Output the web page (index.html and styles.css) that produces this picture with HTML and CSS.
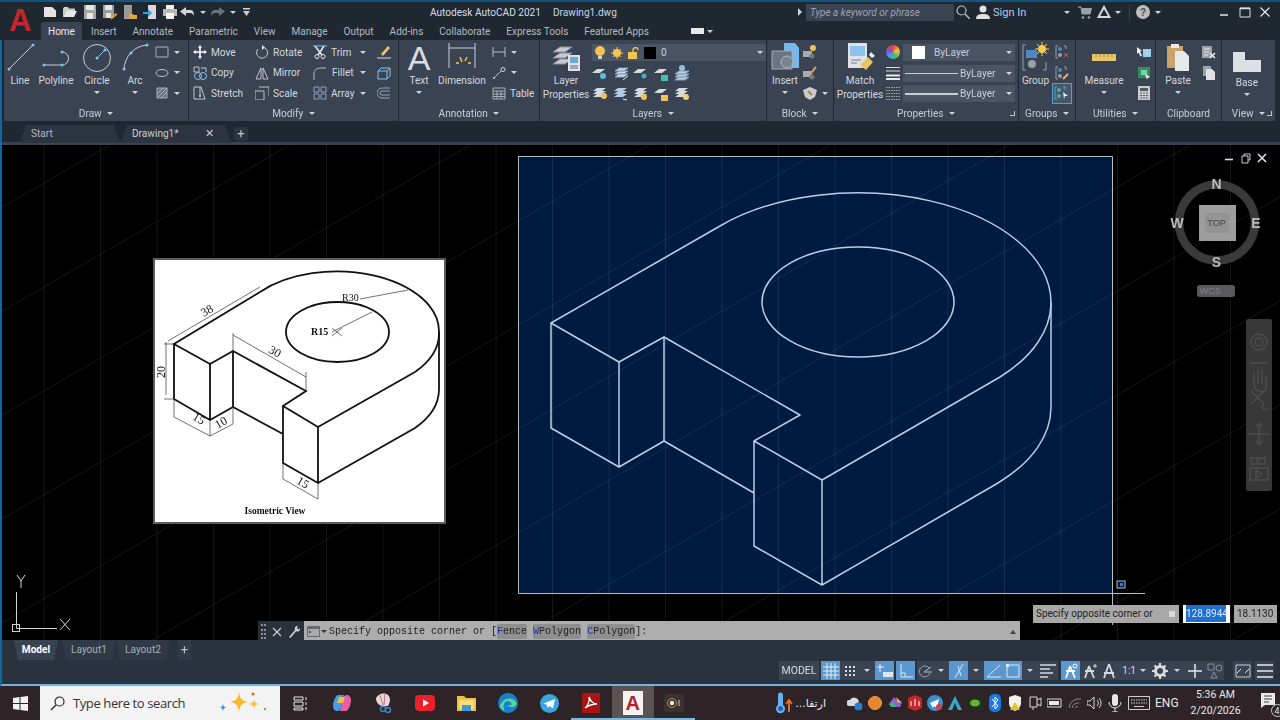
FILE: index.html
```html
<!DOCTYPE html>
<html>
  <head>
    <meta charset="UTF-8">
    <meta name="viewport" content="width=device-width, initial-scale=1.0">
    <title>Autodesk AutoCAD 2021 - Drawing1.dwg</title>
    <link rel="stylesheet" href="styles.css">
  </head>
  <body>
    <div class="window">

      <!-- title bar and ribbon tabs -->
      <header class="appbar">
        <div class="app-logo">A</div>
        <div class="appbar-rows">
          <div class="titlebar">
            <div class="qat">
              <svg class="q" width="16" height="16" viewBox="0 0 16 16"><path d="M2 3h8l4 3.5V13H2z" fill="#e4e4e4"/></svg>
              <svg class="q" width="16" height="16" viewBox="0 0 16 16"><path d="M1 5l1-2h4l1 1.5h6V7H4l-3 6z" fill="#cfcfcf"/><path d="M4 7h11l-3 6H1z" fill="#e8e8e8"/></svg>
              <svg class="q" width="16" height="16" viewBox="0 0 16 16"><path d="M2 1h12v14H2z" fill="#a6a6a6"/><path d="M4 1h8v5H4zM5 9h6v6H5z" fill="#e8e8e8"/></svg>
              <svg class="q" width="16" height="16" viewBox="0 0 16 16"><path d="M1 1h11v13H1z" fill="#9c9c9c"/><path d="M3 1h7v5H3zM4 9h5v5H4z" fill="#e4e4e4"/><path d="M8 14l6-5 1.500 1.500-6 5z" fill="#e0a040"/></svg>
              <svg class="q" width="16" height="16" viewBox="0 0 16 16"><path d="M2 1h8v14H2z" fill="#9a9a9a"/><path d="M7 11l1-1h3l1 1h3v4H7z" fill="#e0a83a"/></svg>
              <svg class="q" width="16" height="16" viewBox="0 0 16 16"><path d="M6 1h8v14H6z" fill="#d8d8d8"/><path d="M1 8h5V5l4 4-4 4v-3H1z" fill="#3aa0d8"/></svg>
              <svg class="q" width="16" height="16" viewBox="0 0 16 16"><path d="M4 1h8v4H4z" fill="#f0f0f0"/><path d="M1 5h14v7H1z" fill="#b8b8b8"/><path d="M4 9h8v6H4z" fill="#f4f4f4"/></svg>
              <svg class="q q15" width="15" height="12" viewBox="0 0 15 12"><path d="M6 1v3h4c3 0 4 2 4 6-1-2-2-3-4-3H6v3L0 5.500z" fill="#d5d5d5"/></svg>
              <span class="q q15"><i class="caret"></i></span>
              <svg class="q q15" width="15" height="12" viewBox="0 0 15 12"><path d="M9 1v3H5C2 4 1 6 1 10c1-2 2-3 4-3h4v3l6-4.500z" fill="#6c7280"/></svg>
              <span class="q q15"><i class="caret"></i></span>
              <svg class="q q12" width="9" height="9" viewBox="0 0 9 9"><path d="M1 0h7v1.500H1zM1 3l3.500 0H8L4.500 8z" fill="#cfcfcf"/></svg>
            </div>
            <div class="app-title"><span>Autodesk AutoCAD 2021</span><span class="doc-title">Drawing1.dwg</span></div>
            <i class="caret-right"></i>
            <div class="search-box">Type a keyword or phrase</div>
            <svg class="search-icon" width="14" height="14" viewBox="0 0 14 14"><circle cx="5.500" cy="5.500" r="4.500" fill="none" stroke="#b8bcc2" stroke-width="1.200"/><path d="M9 9l5 5" stroke="#b8bcc2" stroke-width="1.500"/></svg>
            <svg class="user-icon" width="14" height="14" viewBox="0 0 14 14"><circle cx="7" cy="4" r="3.500" fill="#e0e0e0"/><path d="M0 14c0-4 3-5 7-5s7 1 7 5z" fill="#e0e0e0"/></svg>
            <span class="sign-in">Sign In</span>
            <i class="caret c-account"></i>
            <svg class="cart" width="14" height="13" viewBox="0 0 14 13"><path d="M0 1h3l1 7h8l1.500-5.500H4" fill="#9aa0a8" stroke="#9aa0a8"/><circle cx="5" cy="11.500" r="1.300" fill="#9aa0a8"/><circle cx="11" cy="11.500" r="1.300" fill="#9aa0a8"/></svg>
            <svg class="acad-a" width="14" height="14" viewBox="0 0 14 14"><path d="M7 2L1.500 12h11z" fill="none" stroke="#d8d8d8" stroke-width="2"/></svg>
            <i class="caret c-a360"></i>
            <span class="tb-sep"></span>
            <svg class="help" width="14" height="14" viewBox="0 0 14 14"><circle cx="7" cy="7" r="7" fill="#bdbdbd"/><text x="7" y="11" font-size="10" font-weight="700" text-anchor="middle" fill="#4a4f57" font-family="Liberation Sans, sans-serif">?</text></svg>
            <i class="caret c-help"></i>
            <svg class="win-btn b-min" width="12" height="12" viewBox="0 0 12 12"><path d="M2 9h8" stroke="#e0e0e0" stroke-width="1.600"/></svg>
            <svg class="win-btn" width="12" height="12" viewBox="0 0 12 12"><path d="M1 2h10v9H1z" fill="none" stroke="#e0e0e0"/><path d="M1 2.500h10" stroke="#e0e0e0" stroke-width="1.500"/></svg>
            <svg class="win-btn b-close" width="12" height="12" viewBox="0 0 12 12"><path d="M1.500 1.500l9 9M10.500 1.500l-9 9" stroke="#e8e8e8" stroke-width="1.200"/></svg>
          </div>
          <nav class="ribbon-tabs">
            <span class="rtab active">Home</span>
            <span class="rtab">Insert</span>
            <span class="rtab">Annotate</span>
            <span class="rtab">Parametric</span>
            <span class="rtab">View</span>
            <span class="rtab">Manage</span>
            <span class="rtab">Output</span>
            <span class="rtab">Add-ins</span>
            <span class="rtab">Collaborate</span>
            <span class="rtab">Express Tools</span>
            <span class="rtab">Featured Apps</span>
            <span class="tab-flag"></span><i class="caret"></i>
          </nav>
        </div>
      </header>

      <!-- ribbon -->
      <section class="ribbon">

        <div class="panel p-draw">
          <div class="panel-body">
            <div class="tool w32">
              <svg class="big" width="32" height="30" viewBox="0 0 32 30"><path d="M5 27L29 3" stroke="#c9ced5"/><circle cx="5" cy="27" r="1.500" fill="#7fc4ec"/><circle cx="29" cy="3" r="1.500" fill="#7fc4ec"/></svg>
              <span>Line</span>
            </div>
            <div class="tool w40">
              <svg class="big" width="40" height="30" viewBox="0 0 40 30"><path d="M8 23h18a6.500 6.500 0 0 0 0-13" fill="none" stroke="#c9ced5"/><circle cx="8" cy="23" r="1.500" fill="#7fc4ec"/><circle cx="26" cy="23" r="1.500" fill="#7fc4ec"/><circle cx="26" cy="10" r="1.500" fill="#7fc4ec"/></svg>
              <span>Polyline</span>
            </div>
            <div class="tool w42">
              <svg class="big" width="42" height="30" viewBox="0 0 42 30"><circle cx="21" cy="16" r="13.500" fill="none" stroke="#c9ced5"/><path d="M21 16l8-8" stroke="#7fc4ec"/><circle cx="21" cy="16" r="1.500" fill="#7fc4ec"/><circle cx="29" cy="8" r="1.500" fill="#7fc4ec"/></svg>
              <span>Circle</span><i class="caret"></i>
            </div>
            <div class="tool w34">
              <svg class="big" width="34" height="30" viewBox="0 0 34 30"><path d="M6 27C7 14 16 4 29 3" fill="none" stroke="#c9ced5"/><circle cx="6" cy="27" r="1.500" fill="#7fc4ec"/><circle cx="13" cy="11" r="1.500" fill="#7fc4ec"/><circle cx="29" cy="3" r="1.500" fill="#7fc4ec"/></svg>
              <span>Arc</span><i class="caret"></i>
            </div>
            <div class="rows ml3">
              <div class="row"><svg width="14" height="14" viewBox="0 0 14 14"><path d="M1 2h12v10H1z" fill="none" stroke="#aab0b8"/></svg><i class="caret cg9"></i></div>
              <div class="row"><svg width="14" height="14" viewBox="0 0 14 14"><ellipse cx="7" cy="7" rx="6" ry="3.500" fill="none" stroke="#c0c5cc"/></svg><i class="caret cg9"></i></div>
              <div class="row"><svg width="14" height="14" viewBox="0 0 14 14"><path d="M2 2h10v10H2z" fill="#6a7280" stroke="#aab0b8"/><path d="M2 8l6-6M2 12l10-10M6 12l6-6" stroke="#aab0b8"/></svg><i class="caret cg9"></i></div>
            </div>
          </div>
          <div class="panel-title">Draw <i class="caret"></i></div>
        </div>

        <div class="panel p-modify">
          <div class="panel-body grid-modify">
            <div class="row"><svg width="14" height="14" viewBox="0 0 16 16"><path d="M8 0l2.500 3H9v4h4V5.500L16 8l-3 2.500V9H9v4h1.500L8 16l-2.500-3H7V9H3v1.500L0 8l3-2.500V7h4V3H5.500z" fill="#eceef0"/></svg><span class="lbl">Move</span></div>
            <div class="row"><svg width="14" height="14" viewBox="0 0 14 14"><path d="M9 2.500A5.500 5.500 0 1 1 3 4" fill="none" stroke="#c6cad0"/><path d="M7 0l3 2.500L7 5z" fill="#e0e2e6"/></svg><span class="lbl">Rotate</span></div>
            <div class="row"><svg width="14" height="14" viewBox="0 0 14 14"><path d="M2 1l7 9M11 1L5 10" stroke="#e4e6ea" stroke-width="1.600"/><circle cx="4" cy="11.500" r="2" fill="none" stroke="#e4e6ea"/><circle cx="10" cy="11.500" r="2" fill="none" stroke="#e4e6ea"/><path d="M0 1h14" stroke="#7fc4ec"/></svg><span class="lbl">Trim</span><i class="caret ml-trim"></i></div>
            <div class="row"><svg width="14" height="14" viewBox="0 0 14 14"><path d="M4 9l7-8 2 2-7 8z" fill="#f0c070"/><path d="M0 13h14" stroke="#d8dadd"/></svg></div>

            <div class="row"><svg width="14" height="14" viewBox="0 0 14 14"><path d="M1 1h5v5H1z" fill="none" stroke="#b9bec5"/><circle cx="5" cy="10" r="3.500" fill="none" stroke="#7fc4ec"/><circle cx="10" cy="10" r="3.500" fill="none" stroke="#7fc4ec"/><path d="M8 2h5v4" fill="none" stroke="#c4c8ce"/></svg><span class="lbl">Copy</span></div>
            <div class="row"><svg width="14" height="14" viewBox="0 0 14 14"><path d="M6 2L1 13h5zM8 2l5 11H8z" fill="none" stroke="#c2c6cc"/></svg><span class="lbl">Mirror</span></div>
            <div class="row"><svg width="14" height="14" viewBox="0 0 14 14"><path d="M1 14V8c0-4 3-6 6-6h6" fill="none" stroke="#b8bdc4"/></svg><span class="lbl ml-fillet">Fillet</span><i class="caret ml-fcaret"></i></div>
            <div class="row"><svg width="14" height="14" viewBox="0 0 14 14"><path d="M1 5h9v8H1zM1 5l3-3h9L10 5M13 2v8l-3 3" fill="none" stroke="#7fc4ec"/></svg></div>

            <div class="row"><svg width="14" height="14" viewBox="0 0 14 14"><path d="M1 1h7l4 12H1z" fill="none" stroke="#c2c6cc"/><path d="M7 1v9" stroke="#c2c6cc"/><circle cx="7" cy="10" r="1" fill="#e8eaee"/></svg><span class="lbl">Stretch</span></div>
            <div class="row"><svg width="14" height="14" viewBox="0 0 14 14"><path d="M0 5h9v9H0zM4 1h10v9" fill="none" stroke="#c2c6cc"/></svg><span class="lbl">Scale</span></div>
            <div class="row"><svg width="14" height="14" viewBox="0 0 14 14"><path d="M1 1h5v5H1zM8 1h5v5H8zM1 8h5v5H1zM8 8h5v5H8z" fill="none" stroke="#8aa0b8"/></svg><span class="lbl">Array</span><i class="caret ml-acaret"></i></div>
            <div class="row"><svg width="14" height="14" viewBox="0 0 14 14"><path d="M13 2H5a5 5 0 0 0 0 10h8M13 5H5a2 2 0 0 0 0 4h8" fill="none" stroke="#8ba6bf"/></svg></div>
          </div>
          <div class="panel-title">Modify <i class="caret"></i></div>
        </div>

        <div class="panel p-annotation">
          <div class="panel-body">
            <div class="tool w40">
              <span class="text-a">A</span>
              <span>Text</span><i class="caret"></i>
            </div>
            <div class="tool w46">
              <svg class="big" width="30" height="30" viewBox="0 0 30 30"><path d="M2 1v25M28 1v25M2 6h26" fill="none" stroke="#c9ced5"/><path d="M9 21h3M13 15l2 5M20 15l-2 4M21 21h3" stroke="#f2c452" stroke-width="1.500"/></svg>
              <span>Dimension</span>
            </div>
            <div class="rows ml7">
              <div class="row"><svg width="14" height="14" viewBox="0 0 14 14"><path d="M1 2v10M13 2v10M1 7h12" stroke="#b7bcc3"/></svg><i class="caret cg9"></i></div>
              <div class="row"><svg width="14" height="14" viewBox="0 0 14 14"><path d="M2 12l7-7" stroke="#b7bcc3"/><circle cx="11" cy="3.500" r="2" fill="none" stroke="#d8dade"/><circle cx="2" cy="12" r="1" fill="#d8dade"/></svg><i class="caret cg9"></i></div>
              <div class="row"><svg width="14" height="14" viewBox="0 0 14 14"><path d="M1 2h12v11H1zM1 5h12M1 8h12M1 10.500h12M5 5v8M9 5v8" fill="none" stroke="#aab0b8"/></svg><span class="lbl">Table</span></div>
            </div>
          </div>
          <div class="panel-title">Annotation <i class="caret"></i></div>
        </div>

        <div class="panel p-layers">
          <div class="panel-body">
            <div class="tool w52">
              <svg class="big" width="30" height="30" viewBox="0 0 30 30"><path d="M2 22l7-5h12l-7 5zM2 16l7-5h12l-7 5zM2 10l7-5h12l-7 5z" fill="#c8ccd2" stroke="#8a8f98"/><path d="M17 13h12v16H17z" fill="#dfe3e8"/><path d="M19 15h8v6h-8z" fill="#6aa8d8"/><path d="M19 24h8M19 26h8" stroke="#667"/></svg>
              <span class="two-line">Layer<br>Properties</span>
            </div>
            <div class="col-layers">
              <div class="combo">
                <svg class="i20" width="12" height="14" viewBox="0 0 12 14"><circle cx="6" cy="5" r="5" fill="#f2c452"/><path d="M4 10h4v3H4z" fill="#ccc"/></svg>
                <svg class="i17" width="12" height="12" viewBox="0 0 12 12"><circle cx="6" cy="6" r="4" fill="#f2c452"/><path d="M6 0v12M0 6h12M2 2l8 8M10 2l-8 8" stroke="#f2c452"/></svg>
                <svg class="i15" width="12" height="12" viewBox="0 0 12 12"><path d="M1 5h9v7H1z" fill="#f2c452"/><path d="M6 5V3a2.500 2.500 0 0 1 5 0" fill="none" stroke="#f2c452" stroke-width="1.300"/></svg>
                <span class="swatch-black"></span>
                <span class="combo-text">0</span>
                <i class="caret c-end"></i>
              </div>
              <div class="icon-row">
                <svg width="20" height="18" viewBox="0 0 20 18"><path d="M2 9l5-4h8l-5 4z" fill="#d6dae0"/><circle cx="13" cy="12" r="3" fill="#5ac0e0"/></svg>
                <svg width="20" height="18" viewBox="0 0 20 18"><path d="M4 7l4-3h9l-4 3zM4 10l4-3h9l-4 3zM4 13l4-3h9l-4 3z" fill="#d6dae0" stroke="#7fa8cc"/><path d="M12 16l5-4" stroke="#eee"/></svg>
                <svg width="20" height="18" viewBox="0 0 20 18"><path d="M2 9l5-4h8l-5 4z" fill="#d6dae0"/><circle cx="13" cy="12" r="2.500" fill="#45aebb"/></svg>
                <svg width="20" height="18" viewBox="0 0 20 18"><path d="M2 9l5-4h8l-5 4z" fill="#d6dae0"/><path d="M9 11h7v6H9z" fill="#45c0a8"/></svg>
                <svg width="20" height="18" viewBox="0 0 20 18"><path d="M3 10l4-3h10l-4 3zM3 13l4-3h10l-4 3zM3 16l4-3h10l-4 3z" fill="#c6cad0" stroke="#7fa8cc"/><circle cx="10" cy="4" r="3" fill="#90c0e0"/></svg>
              </div>
              <div class="icon-row">
                <svg width="20" height="18" viewBox="0 0 20 18"><path d="M3 7l4-3h9l-4 3zM3 10l4-3h9l-4 3zM3 13l4-3h9l-4 3z" fill="#d6dae0"/><circle cx="14" cy="12" r="3" fill="#f2c452"/></svg>
                <svg width="20" height="18" viewBox="0 0 20 18"><path d="M3 7l4-3h9l-4 3zM3 10l4-3h9l-4 3zM3 13l4-3h9l-4 3z" fill="#b0cce4"/><path d="M12 15l4 1" stroke="#eee"/></svg>
                <svg width="20" height="18" viewBox="0 0 20 18"><path d="M3 7l4-3h9l-4 3zM3 10l4-3h9l-4 3zM3 13l4-3h9l-4 3z" fill="#d6dae0"/><circle cx="13" cy="13" r="3" fill="#f2c452"/></svg>
                <svg width="20" height="18" viewBox="0 0 20 18"><path d="M2 9l5-4h8l-5 4z" fill="#d6dae0"/><path d="M9 11h7v6H9z" fill="#f2c452"/></svg>
                <svg width="20" height="18" viewBox="0 0 20 18"><path d="M3 7l4-3h9l-4 3zM3 10l4-3h9l-4 3zM3 13l4-3h9l-4 3z" fill="#d6dae0"/><circle cx="14" cy="13" r="3" fill="#e8d070"/></svg>
              </div>
            </div>
          </div>
          <div class="panel-title">Layers <i class="caret"></i></div>
        </div>

        <div class="panel p-block">
          <div class="panel-body">
            <div class="tool w36">
              <svg class="big" width="30" height="30" viewBox="0 0 30 30"><path d="M14 1h11l4 5v20H14z" fill="#76b8ee"/><path d="M2 9h20v18H2z" fill="#6c7480" stroke="#a8adb4"/><circle cx="17" cy="20" r="6" fill="#7c838e" stroke="#b0b5bc"/></svg>
              <span>Insert</span><i class="caret"></i>
            </div>
            <div class="rows">
              <div class="row"><svg width="14" height="14" viewBox="0 0 14 14"><path d="M0 6h9v6H0z" fill="#a8adb4"/><circle cx="10" cy="3" r="3" fill="#f2c452"/><circle cx="9" cy="11" r="2.500" fill="#777"/></svg></div>
              <div class="row"><svg width="14" height="14" viewBox="0 0 14 14"><path d="M0 5h9v6H0z" fill="#a8adb4"/><path d="M8 7l5-6" stroke="#e09a50" stroke-width="2"/><circle cx="9" cy="11" r="2.500" fill="#777"/></svg></div>
              <div class="row"><svg width="14" height="14" viewBox="0 0 14 14"><path d="M0 4l7-3 7 3-2 7-5 3-5-3z" fill="#c9cdd2"/><path d="M5 5l4 4" stroke="#b08040" stroke-width="2"/></svg><i class="caret ml-blk"></i></div>
            </div>
          </div>
          <div class="panel-title">Block <i class="caret"></i></div>
        </div>

        <div class="panel p-properties">
          <div class="panel-body">
            <div class="tool w52">
              <svg class="big" width="30" height="30" viewBox="0 0 30 30"><path d="M3 1h19v25H3z" fill="#dfe2e6"/><path d="M5 4h15v10H5z" fill="#8cc4ec"/><path d="M6 18h10M6 21h6" stroke="#778"/><path d="M15 23l8-8 5 5-7 8z" fill="#e8c668"/><path d="M24 13l2-3 4 4-3 2z" fill="#eee"/></svg>
              <span class="two-line">Match<br>Properties</span>
            </div>
            <div class="col-swatch">
              <div class="swatch-row"><span class="color-wheel"></span></div>
              <div class="swatch-row"><svg width="14" height="14" viewBox="0 0 14 14"><path d="M0 1.500h14M0 5h14" stroke="#d8dadd"/><path d="M0 9.500h14" stroke="#e8eaec" stroke-width="2"/><path d="M0 13h14" stroke="#e8eaec" stroke-width="2"/></svg></div>
              <div class="swatch-row"><svg width="14" height="14" viewBox="0 0 14 14"><path d="M0 1.500h14M0 4.500h14M0 7.500h14M0 10.500h14M0 13.500h14" stroke="#a4a9b0" stroke-dasharray="1.500 1"/></svg></div>
            </div>
            <div class="col-combos">
              <div class="combo"><span class="swatch-white"></span><span class="combo-text c-bylayer">ByLayer</span><i class="caret c-end"></i></div>
              <div class="combo"><span class="line-sample thin"></span><span class="combo-text">ByLayer</span><i class="caret c-end"></i></div>
              <div class="combo"><span class="line-sample"></span><span class="combo-text">ByLayer</span><i class="caret c-end"></i></div>
            </div>
          </div>
          <div class="panel-title">Properties <i class="caret"></i><i class="expander"></i></div>
        </div>

        <div class="panel p-groups">
          <div class="panel-body">
            <div class="tool w33">
              <svg class="big" width="28" height="30" viewBox="0 0 28 30"><path d="M4 3H1v25h3M21 28h3v-8" fill="none" stroke="#9aa0a8"/><path d="M4 8h11v8H4z" fill="#4f88c0"/><circle cx="10" cy="22" r="4" fill="#9a9fa6"/><circle cx="20" cy="7" r="4" fill="#f5cc50"/><path d="M20 0v14M13 7h14M15 2l10 10M25 2L15 12" stroke="#f5cc50"/></svg>
              <span>Group</span>
            </div>
            <div class="rows g-col">
              <div class="row center"><svg width="14" height="14" viewBox="0 0 14 14"><path d="M3 1H1v12h2M9 1h2v3" fill="none" stroke="#9aa0a8"/><circle cx="5" cy="4" r="2" fill="#4f88c0"/><circle cx="5" cy="10" r="2" fill="#9a9fa6"/><path d="M9 8l4 4M13 8l-4 4" stroke="#e05050"/></svg></div>
              <div class="row center"><svg width="14" height="14" viewBox="0 0 14 14"><path d="M3 1H1v12h2M9 1h2v3" fill="none" stroke="#9aa0a8"/><circle cx="5" cy="4" r="2" fill="#4f88c0"/><circle cx="5" cy="10" r="2" fill="#9a9fa6"/><path d="M8 13l5-5" stroke="#e8b070" stroke-width="2"/></svg></div>
              <div class="row center sel"><svg width="16" height="14" viewBox="0 0 16 14"><path d="M3 1H1v12h2M9 1h2v3" fill="none" stroke="#4fb0a0"/><circle cx="5" cy="4" r="2" fill="#4fb0a0"/><circle cx="5" cy="10" r="2" fill="#4fb0a0"/><path d="M9 6l5 4-3 0-1 3z" fill="#f0f0f0"/></svg></div>
            </div>
          </div>
          <div class="panel-title">Groups <i class="caret"></i></div>
        </div>

        <div class="panel p-utilities">
          <div class="panel-body">
            <div class="tool w56">
              <svg class="big" width="26" height="30" viewBox="0 0 26 30"><path d="M1 12h24v7H1z" fill="#e8c668"/><path d="M5 12v3M9 12v3M13 12v3M17 12v3M21 12v3" stroke="#a88c40"/></svg>
              <span>Measure</span><i class="caret"></i>
            </div>
            <div class="rows u-col">
              <div class="row center"><svg width="16" height="14" viewBox="0 0 16 14"><path d="M7 4h8v8H7z" fill="#a4cfe8"/><path d="M1 2l5 4-2 .5 2 4-1.500 1-2-4L1 9z" fill="#f0f0f0"/></svg></div>
              <div class="row center"><svg width="14" height="14" viewBox="0 0 14 14"><path d="M1 1h12v11H1z" fill="#2f8f5f"/><path d="M4 4h6v5H4z" fill="#7fd09f"/><path d="M8 8l5 3-2 .5-1 2z" fill="#fff"/></svg></div>
              <div class="row center"><svg width="12" height="14" viewBox="0 0 12 14"><path d="M0 0h12v14H0z" fill="#c8ccd2"/><path d="M2 2h8v3H2z" fill="#555c66"/><path d="M2 7h2M5 7h2M8 7h2M2 9.500h2M5 9.500h2M8 9.500h2M2 12h2M5 12h2M8 12h2" stroke="#555c66"/></svg></div>
            </div>
          </div>
          <div class="panel-title">Utilities <i class="caret"></i></div>
        </div>

        <div class="panel p-clipboard">
          <div class="panel-body">
            <div class="tool w44">
              <svg class="big" width="24" height="30" viewBox="0 0 24 30"><path d="M1 4h16v22H1z" fill="#c9a36a"/><path d="M5 2h8v4H5z" fill="#e8eaec"/><path d="M9 9h9l5 5v15H9z" fill="#e6e8ea"/></svg>
              <span>Paste</span><i class="caret"></i>
            </div>
            <div class="rows c-col">
              <div class="row"><svg width="14" height="14" viewBox="0 0 14 14"><path d="M0 1h10v12H0z" fill="#9ca2aa"/><path d="M2 4h6M2 7h5M2 10h4" stroke="#e8eaec"/><path d="M8 8l5 5M13 8l-5 5" stroke="#e8eaec" stroke-width="1.500"/></svg></div>
              <div class="row"><svg width="14" height="14" viewBox="0 0 14 14"><path d="M1 0h8v10H1z" fill="#9ca2aa"/><path d="M4 3h6l3 3v8H4z" fill="#dfe2e6"/></svg></div>
            </div>
          </div>
          <div class="panel-title">Clipboard</div>
        </div>

        <div class="panel p-view">
          <div class="panel-body">
            <div class="tool w50 view-tool">
              <svg class="big" width="28" height="24" viewBox="0 0 28 24"><path d="M0 2h12v8h16v12H0z" fill="#dcdfe3"/></svg>
              <span>Base</span><i class="caret"></i>
            </div>
          </div>
          <div class="panel-title">View <i class="caret"></i><i class="expander"></i></div>
        </div>
      </section>

      <!-- drawing tabs -->
      <div class="file-tabs">
        <span class="ftab f-start">Start</span>
        <span class="ftab f-drawing">Drawing1*<b class="ftab-x">✕</b></span>
        <span class="ftab-add">+</span>
      </div>

      <!-- model space -->
      <main class="viewport">
        <svg class="canvas" width="1278" height="495" viewBox="2 145 1278 495">
          <defs>
            <pattern id="grid-v" x="43.5" y="0" width="56.5" height="20" patternUnits="userSpaceOnUse"><path d="M0.500 0v20" stroke="#fff" stroke-opacity=".08"/></pattern>
            <pattern id="grid-d" width="90" height="90" patternUnits="userSpaceOnUse" patternTransform="rotate(-30)"><path d="M0 .500h90" stroke="#fff" stroke-opacity=".07"/></pattern>
          </defs>

          <rect x="2" y="145" width="1278" height="495" fill="#000"/>
          <rect x="518" y="156" width="594" height="437" fill="#011a40"/>
          <rect x="2" y="145" width="1278" height="495" fill="url(#grid-v)"/>
          <rect x="2" y="145" width="1278" height="495" fill="url(#grid-d)"/>

          <!-- selection window -->
          <path d="M518 156.500H1112.500V625M518.500 156V593.500H1145" fill="none" stroke="#b4bcc6"/>
          <rect x="1117" y="581" width="8" height="7" fill="#001a40" stroke="#b4bcc6"/>
          <rect x="1120" y="583" width="3" height="3" fill="#2a7fe0"/>

          <!-- isometric part -->
          <g fill="none" stroke="#b7d0ea" stroke-width="1.500" stroke-linejoin="round">
            <path d="M720 226L551 323 619 362 664 337 800 415 754 441 822 480 1000 377"/>
            <path d="M720 226A193 110 0 0 1 1051 302A193 110 0 0 1 1000 377"/>
            <path d="M551 323V428L619 467 664 441 754 493M619 362V467M664 337V441"/>
            <path d="M754 441V546L822 585V480M822 585L998 483A193 110 0 0 0 1051 407V302"/>
            <ellipse cx="858" cy="302" rx="96" ry="55"/>
          </g>

          <!-- reference image attached to the drawing -->
          <rect x="154" y="259" width="291" height="264" fill="#fff" stroke="#5c5c5c" stroke-width="2"/>
          <g fill="none" stroke="#111" stroke-width="1.800">
            <path d="M260 292L174 344 210 364 233 351 306 391 283 406 318 427 415 372"/>
            <path d="M260 292A102 60 0 0 1 439 332A102 60 0 0 1 415 372"/>
            <path d="M174 344V399L210 420 233 407 283 434M210 364V420M233 351V407"/>
            <path d="M283 406V463L318 483V427M318 483L415 428A102 60 0 0 0 439 390V332"/>
            <ellipse cx="337.500" cy="332" rx="51.500" ry="30"/>
          </g>
          <g fill="none" stroke="#333" stroke-width=".7">
            <path d="M168 341L260 287M166 342V395M174 344H164M174 399H164"/>
            <path d="M233 335L306 377M233 333V351M306 372V391"/>
            <path d="M174 399V417L210 436 233 424V407M210 420V436"/>
            <path d="M283 463V479L318 499V483"/>
            <path d="M360 299L408 290M332 332L372 312M332 328L342 336M332 336L342 328"/>
          </g>
          <g class="iso-labels">
            <text transform="translate(209 314) rotate(-30)">38</text>
            <text transform="translate(273 355) rotate(30)">30</text>
            <text transform="translate(165 372) rotate(-90)">20</text>
            <text transform="translate(197 422) rotate(30)">15</text>
            <text transform="translate(223 426) rotate(-30)">10</text>
            <text transform="translate(301 486) rotate(30)">15</text>
            <text x="342" y="301" class="small">R30</text>
            <text x="311" y="335" class="small bold">R15</text>
            <text x="275" y="514" class="caption">Isometric View</text>
          </g>

          <!-- viewport controls -->
          <path d="M1225 159.500h8" stroke="#ddd" stroke-width="1.600"/>
          <path d="M1242 156h6v7h-6zM1244 156v-2h6v6h-2" fill="none" stroke="#ccc"/>
          <path d="M1258 154l8 8M1266 154l-8 8" stroke="#e8e8e8" stroke-width="1.500"/>

          <circle cx="1217" cy="222.500" r="38" fill="none" stroke="#3a3a3a" stroke-width="8.500"/>
          <rect x="1199" y="205" width="37" height="36" fill="#9d9d9d"/>
          <rect x="1205" y="213" width="24" height="20" fill="#939393"/>
          <g class="cube-labels">
            <text x="1216.500" y="189">N</text>
            <text x="1256" y="228">E</text>
            <text x="1216.500" y="267">S</text>
            <text x="1177" y="228">W</text>
            <text x="1216.500" y="226" class="cube-top">TOP</text>
          </g>
          <rect x="1197" y="285" width="38" height="12" rx="3" fill="#5a5a5e"/>
          <text x="1200" y="294" class="wcs">WCS</text>

          <rect x="1246" y="319" width="26" height="172" rx="2" fill="#383838"/>
          <g fill="none" stroke="#4e4e4e" stroke-width="1.300">
            <circle cx="1259" cy="342" r="8"/>
            <circle cx="1259" cy="342" r="4"/>
            <path d="M1250 363h18M1254 384v-12M1258 384v-15M1262 384v-14M1266 386v-10M1254 384c1 6 4 8 8 8s4-3 4-6"/>
            <path d="M1251 391l13 13M1264 391l-13 13M1264 404a3 3 0 1 0 4 4"/>
            <path d="M1259 423v22M1248 434h22M1256 427l3-4 3 4M1256 441l3 4 3-4"/>
            <path d="M1251 458h6v6h-6zM1259 458h6v6h-6zM1250 468h18v12h-18zM1256 470l6 4-6 4z"/>
          </g>

          <!-- UCS icon -->
          <g class="ucs">
            <path d="M16.500 592V628.500H57" fill="none" stroke="#cfcfcf"/>
            <rect x="12.500" y="624.500" width="7" height="7" fill="none" stroke="#cfcfcf"/>
          </g>
          <path d="M17 575l4 6 4-6M21 581v7M60 619l10 11M70 619l-10 11" fill="none" stroke="#d8d8d8"/>
        </svg>

        <!-- command line floats over the canvas -->
        <div class="cmdline">
          <div class="cmd-tools">
            <span class="grip"></span>
            <svg width="10" height="10" viewBox="0 0 10 10"><path d="M1 1l8 8M9 1L1 9" stroke="#c8ccd2" stroke-width="1.300"/></svg>
            <svg width="13" height="13" viewBox="0 0 13 13"><path d="M1 12l6-7c-1-2 0-4 3-4l-1 2 1.500 1.500L12 3c.5 3-1.500 4-4 3.500L2.500 13z" fill="#c8ccd2"/></svg>
          </div>
          <div class="cmd-body">
            <svg width="13" height="11" viewBox="0 0 13 11"><path d="M0 0h13v11H0z" fill="#666a70"/><path d="M1 3h11v7H1z" fill="#a9a9a9"/><path d="M2 5l2 1-2 1" stroke="#444" fill="none"/></svg>
            <i class="caret cmd-caret"></i>
            <span class="cmd-text">Specify opposite corner or [<span class="opt"><b>F</b>ence</span> <span class="opt"><b>W</b>Polygon</span> <span class="opt"><b>C</b>Polygon</span>]:</span>
            <i class="caret-up"></i>
          </div>
        </div>

        <!-- dynamic input -->
        <div class="dyn-input">
          <div class="dyn-prompt">Specify opposite corner or<span class="dyn-icon"></span></div>
          <div class="dyn-field active"><span>128.8944</span></div>
          <div class="dyn-field">18.1130</div>
        </div>
      </main>

      <!-- layout tabs -->
      <div class="layout-tabs">
        <span class="ltab active">Model</span>
        <span class="ltab">Layout1</span>
        <span class="ltab">Layout2</span>
        <span class="ltab-add">+</span>
      </div>

      <!-- status bar -->
      <footer class="statusbar">
        <span class="st model">MODEL</span>
        <span class="st on"><svg width="16" height="16" viewBox="0 0 16 16"><path d="M0 4h16M0 8h16M0 12h16M4 0v16M8 0v16M12 0v16" stroke="#e8f0f8"/></svg></span>
        <span class="st"><svg width="12" height="12" viewBox="0 0 12 12"><path d="M1 1h2v2H1zM5 1h2v2H5zM9 1h2v2H9zM1 5h2v2H1zM5 5h2v2H5zM9 5h2v2H9zM1 9h2v2H1zM5 9h2v2H5zM9 9h2v2H9z" fill="#d8dade"/></svg></span>
        <span class="st-caret"><i class="caret"></i></span>
        <span class="st on gap2"><svg width="16" height="16" viewBox="0 0 16 16"><path d="M3 1v8M0 4h7" stroke="#eef"/><path d="M6 9h10v5H6z" fill="#dce8f4"/></svg></span>
        <span class="st on gap2"><svg width="16" height="16" viewBox="0 0 16 16"><path d="M3 1v13h12M3 10h4v4" fill="none" stroke="#dce8f4"/></svg></span>
        <span class="st wide"><svg width="14" height="14" viewBox="0 0 14 14"><path d="M11 4A5.500 5.500 0 1 0 12 9" fill="none" stroke="#9aa0a8"/><path d="M6 8l7-5M6 8h8" stroke="#b8bcc2"/></svg></span>
        <span class="st-caret"><i class="caret"></i></span>
        <span class="st on"><svg width="16" height="16" viewBox="0 0 16 16"><path d="M4 15l8-14M7 3l3 10" stroke="#dce8f4"/></svg></span>
        <span class="st-caret"><i class="caret"></i></span>
        <span class="st on"><svg width="16" height="16" viewBox="0 0 16 16"><path d="M1 14L14 2M1 14h14" stroke="#dce8f4"/></svg></span>
        <span class="st on"><svg width="16" height="16" viewBox="0 0 16 16"><path d="M2 2h12v12H2z" fill="none" stroke="#dce8f4"/><path d="M1 1h3v3H1z" fill="#dce8f4"/></svg></span>
        <span class="st-caret"><i class="caret"></i></span>
        <span class="st lw"><svg width="16" height="14" viewBox="0 0 16 14"><path d="M0 1h16M0 5h10M0 9h13M0 13h8" stroke="#d8dade" stroke-width="1.600"/></svg></span>
        <span class="st on"><svg width="16" height="16" viewBox="0 0 16 16"><path d="M7 3L3 15M7 3l5 12M3 8h9" stroke="#fff" stroke-width="1.800"/><circle cx="12" cy="3" r="2" fill="none" stroke="#fff"/></svg></span>
        <span class="st"><svg width="16" height="16" viewBox="0 0 16 16"><path d="M7 3L3 15M7 3l5 12M3 8h9" stroke="#d8dade" stroke-width="1.800"/><path d="M11 3h4M13 1v4" stroke="#d8dade"/></svg></span>
        <span class="st"><svg width="16" height="16" viewBox="0 0 16 16"><path d="M8 1L3 15M8 1l5 14M3 10h10" stroke="#d8dade" stroke-width="1.800"/></svg></span>
        <span class="st-scale">1:1</span>
        <span class="st-caret narrow"><i class="caret"></i></span>
        <span class="st gear"><svg width="16" height="16" viewBox="0 0 16 16"><circle cx="8" cy="8" r="4.500" fill="none" stroke="#d8dade" stroke-width="3"/><path d="M8 0v3M8 13v3M0 8h3M13 8h3M2.500 2.500l2 2M11.500 11.500l2 2M13.500 2.500l-2 2M4.500 11.500l-2 2" stroke="#d8dade" stroke-width="2.200"/></svg></span>
        <span class="st-caret"><i class="caret"></i></span>
        <span class="st plus"><svg width="14" height="14" viewBox="0 0 14 14"><path d="M7 0v14M0 7h14" stroke="#e4e6ea" stroke-width="1.500"/></svg></span>
        <span class="st"><svg width="16" height="16" viewBox="0 0 16 16"><path d="M1 1h6v6H1z" fill="none" stroke="#8a9098"/><circle cx="12" cy="5" r="3" fill="none" stroke="#8a9098"/><path d="M7 9l3 6H4z" fill="none" stroke="#8a9098"/></svg></span>
        <span class="st split"><svg width="16" height="14" viewBox="0 0 16 14"><path d="M1 1h14v12H1z" fill="none" stroke="#c8ccd2"/><path d="M2 9l4-4M10 9l4-4" stroke="#e8eaec"/></svg></span>
        <span class="st"><svg width="16" height="14" viewBox="0 0 16 14"><path d="M0 1h16M0 7h16M0 13h16" stroke="#e8eaec" stroke-width="1.600"/></svg></span>
      </footer>
    </div>

    <!-- windows taskbar -->
    <div class="taskbar">
      <div class="start"><svg width="15" height="15" viewBox="0 0 15 15"><path d="M0 2l6.500-1v6H0zM7.500 1L15 0v7H7.500zM0 8h6.500v6L0 13zM7.500 8H15v7l-7.500-1z" fill="#f2f2f2"/></svg></div>
      <div class="win-search">
        <svg width="15" height="15" viewBox="0 0 15 15"><circle cx="9.500" cy="5.500" r="4.500" fill="none" stroke="#222" stroke-width="1.200"/><path d="M6 9l-5 5" stroke="#222" stroke-width="1.300"/></svg>
        <span class="win-search-text">Type here to search</span>
        <svg class="sparkle" width="50" height="28" viewBox="0 0 50 28"><path d="M21 3c1 7 3 9 9 10-6 1-8 3-9 10-1-7-3-9-9-10 6-1 8-3 9-10z" fill="#f6b72a"/><path d="M36 10c.5 3 1.500 4 5 5-3.500 1-4.500 2-5 5-.5-3-1.500-4-5-5 3.500-1 4.500-2 5-5z" fill="#f6c84a"/><path d="M5 15c.4 2 1 3 3 3.500-2 .5-2.600 1.500-3 3.500-.4-2-1-3-3-3.500 2-.5 2.600-1.500 3-3.500z" fill="#2a9fd8"/><circle cx="35" cy="5" r="1.500" fill="#e0602a"/><circle cx="47" cy="20" r="1.200" fill="#7ab040"/></svg>
      </div>
      <div class="task"><svg width="15" height="15" viewBox="0 0 15 15"><path d="M1 1h9v3H1zM1 6h9v4H1zM1 12h9v2H1zM13 1v3M13 6v3M13 11v3" fill="none" stroke="#e8e8e8"/></svg></div>
      <div class="task"><svg width="20" height="20" viewBox="0 0 20 20"><path d="M6 2h6l-3 12c-.5 3-2 4-4 4s-4-2-4-5c0-5 3-11 5-11z" fill="#3fa0e8"/><path d="M14 18H8l3-12c.5-3 2-4 4-4s4 2 4 5c0 5-3 11-5 11z" fill="#e85fa8"/><path d="M7 4h6l-2 6H5z" fill="#f0c040"/></svg></div>
      <div class="task"><svg width="20" height="22" viewBox="0 0 20 22"><path d="M2 6c2-4 8-6 12-3 3 3 2 8 0 11H8C4 13 2 10 2 6z" fill="#e8d8d8"/><path d="M6 3l3 10M11 2l-1 11" stroke="#c86a80"/><circle cx="9" cy="17" r="2.500" fill="none" stroke="#3a80c0" stroke-width="1.500"/><circle cx="14" cy="18" r="2.500" fill="none" stroke="#3a80c0" stroke-width="1.500"/></svg></div>
      <div class="task"><svg width="20" height="16" viewBox="0 0 20 16"><rect width="20" height="16" rx="4" fill="#e8202a"/><path d="M8 4.500l6 3.500-6 3.500z" fill="#fff"/></svg></div>
      <div class="task"><svg width="19" height="18" viewBox="0 0 19 18"><path d="M0 2h7l2 2h10v13H0z" fill="#f2c23a"/><path d="M2 6h15v9H2z" fill="#f9dd7a"/><path d="M5 11h9v6H5z" fill="#3f9ad8"/></svg></div>
      <div class="task"><svg width="20" height="20" viewBox="0 0 20 20"><circle cx="10" cy="10" r="10" fill="#1a7fd0"/><path d="M2 13C4 5 14 3 18 9c2 3-1 5-5 5-2 0-3-1-3-2 4 2 5-3 0-4-4 0-6 6-3 10-3-1-5-3-5-5z" fill="#55d890"/></svg></div>
      <div class="task"><svg width="19" height="19" viewBox="0 0 19 19"><circle cx="9.500" cy="9.500" r="9.500" fill="#3aa6e0"/><path d="M3.500 9.500L15 5l-2 9.500-3.500-2.500-2 2-.5-3z" fill="#fff"/></svg></div>
      <div class="task open"><svg width="18" height="20" viewBox="0 0 18 20"><path d="M0 0h18v20H0z" fill="#a81412"/><path d="M3 15c3-2 5-8 4-11 2 5 4 7 8 7-4 0-8 1-12 4z" fill="none" stroke="#fff" stroke-width="1.400"/></svg></div>
      <div class="task cad"><span class="cad-icon">A</span></div>
      <div class="task open"><svg width="20" height="18" viewBox="0 0 20 18"><rect width="20" height="18" rx="4" fill="#3c3330"/><circle cx="8" cy="9" r="4.500" fill="none" stroke="#c88a4a"/><circle cx="8" cy="9" r="2.200" fill="#f0f0f0"/><path d="M15 6v6" stroke="#c8c8c8"/></svg></div>

      <div class="tray">
        <svg class="thermo" width="18" height="22" viewBox="0 0 18 22"><path d="M3 3a2.500 2.500 0 0 1 5 0v10a4.500 4.500 0 1 1-5 0z" fill="#6ab0f0"/><circle cx="5.500" cy="16.500" r="2.500" fill="#1a60c0"/><path d="M14 20V10M11 12l3-4 3 4" fill="none" stroke="#f07020" stroke-width="1.800"/></svg>
        <span class="weather" dir="rtl">ارتفا...</span>
        <svg class="t" width="16" height="16" viewBox="0 0 16 16"><path d="M2 11a3 3 0 0 1 1-6 5 5 0 0 1 9 1l-2 5z" fill="#d8dade"/><circle cx="11.500" cy="11.500" r="4" fill="#2a80d0"/></svg>
        <svg class="t" width="16" height="16" viewBox="0 0 16 16"><circle cx="8" cy="8" r="6.500" fill="#e8862a" stroke="#f0a050"/></svg>
        <svg class="t" width="16" height="16" viewBox="0 0 16 16"><path d="M2 9l5-7 3 3 5 2-2 5H5z" fill="#9060d0"/><path d="M2 9l5-2 2 5H4z" fill="#40b080"/><path d="M9 2l5 5-3 1z" fill="#f0c040"/></svg>
        <svg class="t" width="16" height="16" viewBox="0 0 16 16"><path d="M1 3l7-3 7 3v10l-7 3-7-3z" fill="#c02828"/><path d="M4 6v5M8 4v7M12 6v5" stroke="#fff"/></svg>
        <svg class="t" width="16" height="16" viewBox="0 0 16 16"><circle cx="8" cy="8" r="8" fill="#3a90d0"/><path d="M3 8l9-4-2 9-3-2-1 2z" fill="#fff"/><circle cx="12" cy="12" r="3" fill="#d04040"/></svg>
        <svg class="t" width="16" height="16" viewBox="0 0 16 16"><path d="M8 1L1 15h4L8 8l3 7h4z" fill="#38a8c8"/></svg>
        <svg class="t" width="16" height="16" viewBox="0 0 16 16"><path d="M0 2h16v12H0z" fill="#1e3020"/><ellipse cx="8" cy="8" rx="5" ry="3.500" fill="#70b030"/></svg>
        <svg class="t" width="16" height="18" viewBox="0 0 16 18"><rect x="2" y="0" width="12" height="18" rx="5" fill="#1a78e0"/><path d="M5 5l6 7-3 3V3l3 3-6 7" fill="none" stroke="#fff"/></svg>
        <svg class="t" width="16" height="16" viewBox="0 0 16 16"><path d="M8 0l6 2v6c0 4-3 7-6 8-3-1-6-4-6-8V2z" fill="#f0f0f0"/><path d="M8 7l5 8H3z" fill="#e8c020"/></svg>
        <svg class="t" width="16" height="16" viewBox="0 0 16 16"><path d="M3 2h7v10H3zM10 5l4-2v8l-4-2M6 12v3" fill="none" stroke="#d8d8d8"/></svg>
        <svg class="t" width="16" height="16" viewBox="0 0 16 16"><path d="M0 4h14v8H0z" fill="none" stroke="#d8d8d8"/><path d="M2 6h10v4H2z" fill="#e8e8e8"/></svg>
        <svg class="t" width="16" height="16" viewBox="0 0 16 16"><path d="M2 13a10 10 0 0 1 12-9M5 13a6 6 0 0 1 7-5M8 13a2 2 0 0 1 3-1" fill="none" stroke="#8a8a8a"/></svg>
        <svg class="t" width="16" height="16" viewBox="0 0 16 16"><path d="M0 6h3l4-4v12l-4-4H0z" fill="none" stroke="#d8d8d8"/><path d="M10 5a4 4 0 0 1 0 6M12 3a7 7 0 0 1 0 10" fill="none" stroke="#d8d8d8"/></svg>
        <svg class="t" width="16" height="18" viewBox="0 0 16 18"><rect x="5" y="0" width="6" height="12" rx="3" fill="#e8e8e8"/><path d="M2 8a6 6 0 0 0 12 0M8 14v4M5 18h6" fill="none" stroke="#e8e8e8"/></svg>
        <svg class="kbd" width="22" height="14" viewBox="0 0 22 14"><path d="M.5.500h21v13H.5z" fill="none" stroke="#d0d0d0"/><path d="M3 4h16M3 7h16" stroke="#d0d0d0" stroke-dasharray="1.500 1"/><path d="M6 10.500h10" stroke="#d0d0d0"/></svg>
        <span class="lang">ENG</span>
        <div class="clock"><span>5:36 AM</span><span>2/20/2026</span></div>
        <div class="notify"><svg width="20" height="22" viewBox="0 0 20 22"><path d="M1 1h14v12H5l-4 3z" fill="#e8e8e8"/><path d="M4 4h8M4 7h8M4 10h5" stroke="#444"/></svg><span class="notify-num">4</span></div>
      </div>
    </div>
  </body>
</html>
```

FILE: styles.css
```css
* {
  box-sizing: border-box;
}

body {
  margin: 0;
  width: 1280px;
  height: 720px;
  overflow: hidden;
  font-family: Roboto, "Noto Sans", sans-serif;
  font-size: 10.100px;
  color: #d3d8df;
  background: #000;
}

i {
  font-style: normal;
  display: inline-block;
}

svg {
  display: block;
  flex: none;
}

/* little triangles used all over the ribbon */
.caret {
  width: 0;
  height: 0;
  border-left: 3px solid transparent;
  border-right: 3px solid transparent;
  border-top: 3px solid #d0d4da;
}

.caret-right {
  width: 0;
  height: 0;
  border-top: 4px solid transparent;
  border-bottom: 4px solid transparent;
  border-left: 4px solid #d0d4da;
  margin-left: 178px;
}

.caret-up {
  width: 0;
  height: 0;
  border-left: 3px solid transparent;
  border-right: 3px solid transparent;
  border-bottom: 4px solid #444;
  margin-left: auto;
  margin-right: 4px;
}

.window {
  height: 686px;
  display: flex;
  flex-direction: column;
  border-left: 2px solid #0f66a3;
  border-bottom: 2px solid #6fb4de;
  filter: blur(.35px);
}

/* ---- title bar ---- */
.appbar {
  height: 40px;
  display: flex;
  background: #1f2731;
  border-top: 2px solid #14557f;
  margin-left: -2px;
}

.app-logo {
  width: 40px;
  padding: 2px 0 0 9px;
  font-family: "Liberation Sans", sans-serif;
  font-weight: 700;
  font-size: 31px;
  line-height: 34px;
  color: #c4262c;
}

.appbar-rows {
  flex: 1;
  display: flex;
  flex-direction: column;
}

.titlebar {
  height: 20px;
  display: flex;
  align-items: center;
}

.qat {
  display: flex;
  align-items: center;
}

.q {
  width: 20px;
  display: flex;
  justify-content: center;
  padding: 0 2px;
}

.q15 {
  width: 15px;
  padding: 0;
}

.q12 {
  width: 9px;
  margin-left: 2px;
  padding: 0;
}

.app-title {
  margin-left: 179px;
  display: flex;
  gap: 12px;
  width: 190px;
  color: #d8dce2;
  white-space: nowrap;
}

.doc-title {
  color: #c8d4e2;
}

.search-box {
  width: 148px;
  height: 17px;
  margin-left: 4px;
  padding-left: 4px;
  line-height: 17px;
  font-style: italic;
  font-size: 10px;
  color: #9ea5af;
  background: #3a4352;
}

.search-icon {
  margin-left: 2px;
}

.user-icon {
  margin-left: 6px;
}

.sign-in {
  width: 32px;
  margin-left: 3px;
  color: #b5cee6;
  font-size: 11px;
  white-space: nowrap;
}

.c-account {
  margin-left: 39px;
}

.cart {
  margin-left: 8px;
}

.acad-a {
  margin-left: 5px;
}

.c-a360 {
  margin-left: 4px;
}

.tb-sep {
  width: 1px;
  height: 15px;
  margin-left: 8px;
  background: #3a4352;
}

.help {
  margin-left: 6px;
}

.c-help {
  margin-left: 5px;
}

.win-btn {
  margin-left: 9px;
}

.b-min {
  margin-left: 57px;
}

.b-close {
  margin-left: 8px;
}

/* ---- ribbon tabs ---- */
.ribbon-tabs {
  height: 18px;
  display: flex;
  align-items: stretch;
  gap: 16px;
  margin-left: 1px;
  font-size: 10px;
  color: #b4bac3;
}

.rtab {
  line-height: 19px;
  white-space: nowrap;
}

.rtab.active {
  margin-right: -7px;
  padding: 0 7px;
  color: #e8ebef;
  background: #3a4352;
  border-radius: 2px 2px 0 0;
}

.tab-flag {
  width: 13px;
  height: 6px;
  margin: 6px 0 0 26px;
  background: #e8e8e8;
}

.ribbon-tabs .caret {
  margin: 8px 0 0 -13px;
}

/* ---- ribbon ---- */
.ribbon {
  height: 81px;
  display: flex;
  padding-left: 2px;
  background: #1f2731;
}

.panel {
  display: flex;
  flex-direction: column;
  margin-right: 1px;
  background: #3a4352;
}

.p-draw { width: 184px; }
.p-modify { width: 209px; }
.p-annotation { width: 140px; }
.p-layers { width: 226px; }
.p-block { width: 66px; }
.p-properties { width: 184px; }
.p-groups { width: 56px; }
.p-utilities { width: 79px; }
.p-clipboard { width: 65px; }
.p-view { width: 53px; }

.panel-body {
  height: 66px;
  display: flex;
  padding-top: 2px;
}

.panel-title {
  position: relative;
  height: 15px;
  line-height: 15px;
  text-align: center;
  white-space: nowrap;
  color: #c6cdd6;
}

.panel-title .caret {
  margin-left: 3px;
  vertical-align: 2px;
}

.expander {
  position: absolute;
  right: 3px;
  top: 5px;
  width: 5px;
  height: 5px;
  border-right: 1px solid #c0c4ca;
  border-bottom: 1px solid #c0c4ca;
}

.tool {
  display: flex;
  flex-direction: column;
  align-items: center;
  line-height: 14px;
  white-space: nowrap;
}

.tool .caret {
  margin-top: 3px;
}

.big {
  height: 30px;
  margin-bottom: 2px;
}

.w32 { width: 32px; }
.w33 { width: 33px; }
.w34 { width: 34px; }
.w36 { width: 36px; }
.w40 { width: 40px; }
.w42 { width: 42px; }
.w44 { width: 44px; }
.w46 { width: 46px; }
.w50 { width: 50px; }
.w52 { width: 52px; }
.w56 { width: 56px; }

.view-tool {
  padding-top: 8px;
}

.view-tool .big {
  height: 24px;
  margin-bottom: 2px;
}

.two-line {
  line-height: 14px;
  text-align: center;
}

.text-a {
  height: 32px;
  font-family: "Liberation Sans", sans-serif;
  font-size: 34px;
  line-height: 32px;
  color: #d8dce2;
}

.rows {
  display: flex;
  flex-direction: column;
}

.row {
  height: 20.5px;
  display: flex;
  align-items: center;
}

.row.center {
  justify-content: center;
}

.ml3 { margin-left: 3px; }
.ml7 { margin-left: 7px; }
.cg9 { margin-left: 5px; }

.lbl {
  margin-left: 4px;
  white-space: nowrap;
}

.grid-modify {
  display: grid;
  grid-template-columns: 62px 58px 64px 20px;
  grid-auto-rows: 20.5px;
  padding-left: 4px;
}

.ml-trim,
.ml-fcaret,
.ml-acaret {
  margin-left: auto;
  margin-right: 11px;
}

.ml-fillet { margin-left: 5px; }
.ml-blk { margin-left: 5px; }

.col-layers {
  width: 174px;
  margin-top: 2px;
}

.combo {
  position: relative;
  height: 17px;
  display: flex;
  align-items: center;
  background: #4a5464;
}

.col-layers .combo {
  margin-bottom: 1.500px;
}

.i20 { margin-left: 2px; }
.i17 { margin-left: 5px; }
.i15 { margin-left: 4px; }

.swatch-black {
  width: 12px;
  height: 12px;
  margin-left: 5px;
  background: #000;
}

.combo-text {
  margin-left: 5px;
  color: #c8ced6;
  white-space: nowrap;
}

.c-end {
  position: absolute;
  right: 3px;
  top: 7px;
}

.icon-row {
  height: 20.5px;
  display: flex;
  align-items: center;
  margin-left: -2px;
}

.icon-row svg {
  margin-right: .5px;
}

.col-swatch {
  width: 14px;
}

.swatch-row {
  height: 20.5px;
  display: flex;
  align-items: center;
}

.color-wheel {
  width: 14px;
  height: 14px;
  border-radius: 50%;
  background: conic-gradient(#e84040, #f0c040, #50c060, #40a0e0, #8050d0, #e84040);
}

.col-combos {
  width: 112px;
  margin: 2px 0 0 3px;
}

.col-combos .combo {
  margin-bottom: 3.500px;
}

.swatch-white {
  width: 13px;
  height: 13px;
  margin-left: 9px;
  background: #fff;
}

.c-bylayer {
  margin-left: 9px;
}

.line-sample {
  width: 53px;
  height: 2px;
  margin-left: 2px;
  background: #c8ced6;
}

.line-sample.thin {
  height: 1px;
}

.line-sample + .combo-text {
  margin-left: 2px;
}

.g-col {
  width: 20px;
}

.sel {
  border: 1px solid #5a9bd5;
  background: #46586e;
}

.u-col {
  width: 23px;
}

.c-col {
  margin-left: 2px;
}

/* ---- drawing tabs ---- */
.file-tabs {
  height: 24px;
  display: flex;
  align-items: flex-start;
  padding: 4px 0 0 18px;
  background: #1f2731;
  border-bottom: 3px solid #3a4352;
}

.ftab {
  height: 18px;
  line-height: 18px;
  background: #2c3440;
  clip-path: polygon(0 100%, 6px 0, calc(100% - 6px) 0, 100% 100%);
  color: #b0b6be;
}

.f-start {
  width: 100px;
  padding-left: 11px;
}

.f-drawing {
  position: relative;
  width: 110px;
  margin-left: 1px;
  padding-left: 11px;
  color: #c8ced6;
}

.ftab-x {
  position: absolute;
  left: 84px;
  font-weight: 400;
  font-size: 11px;
  font-family: "DejaVu Sans", sans-serif;
}

.ftab-add {
  width: 14px;
  height: 14px;
  margin: 2px 0 0 3px;
  line-height: 13px;
  text-align: center;
  font-size: 13px;
  background: #2c3440;
  border-radius: 3px;
  color: #c0c5cc;
}

/* ---- model space ---- */
.viewport {
  position: relative;
  height: 495px;
  overflow: hidden;
}

.canvas {
  position: absolute;
  left: 0;
  top: 0;
}

.iso-labels text {
  font-family: "Liberation Serif", serif;
  font-size: 12px;
  fill: #111;
  text-anchor: middle;
}

.iso-labels .small {
  font-size: 10px;
  text-anchor: start;
}

.iso-labels .bold {
  font-weight: 700;
}

.iso-labels .caption {
  font-size: 9.500px;
  font-weight: 700;
}

.cube-labels text {
  font-family: "Liberation Sans", sans-serif;
  font-size: 14px;
  font-weight: 700;
  fill: #bcbcbc;
  text-anchor: middle;
}

.cube-labels .cube-top {
  font-size: 9px;
  font-weight: 400;
  fill: #444;
}

.wcs {
  font-family: "Liberation Sans", sans-serif;
  font-size: 9px;
  fill: #848488;
}

.cmdline {
  position: absolute;
  left: 256px;
  top: 476px;
  width: 762px;
  height: 21px;
  display: flex;
}

.cmd-tools {
  width: 46px;
  display: flex;
  align-items: center;
  gap: 6px;
  padding-left: 3px;
  background: #2a313b;
}

.grip {
  width: 5px;
  height: 15px;
  border-left: 2px dotted #8a9098;
  border-right: 2px dotted #8a9098;
}

.cmd-body {
  flex: 1;
  display: flex;
  align-items: center;
  padding-left: 3px;
  background: #adadad;
}

.cmd-caret {
  margin-left: 1px;
  border-top-color: #333;
}

.cmd-text {
  margin-left: 2px;
  font-family: "Liberation Mono", monospace;
  font-size: 10px;
  color: #222;
  white-space: pre;
}

.opt {
  background: #8f8f8f;
  border-radius: 2px;
  padding: 2px 0;
}

.opt b {
  font-weight: 400;
  color: #2a2ac0;
}

.dyn-input {
  position: absolute;
  left: 1031px;
  top: 460px;
  display: flex;
  font-size: 10px;
  color: #1f1f1f;
}

.dyn-prompt {
  position: relative;
  width: 146px;
  height: 18px;
  padding-left: 3px;
  line-height: 17px;
  background: #a8a8a8;
}

.dyn-icon {
  position: absolute;
  right: 4px;
  top: 6px;
  width: 6px;
  height: 6px;
  background: #d8d8d8;
}

.dyn-field {
  width: 43px;
  height: 18px;
  margin-left: 4px;
  padding-left: 3px;
  line-height: 17px;
  background: #a8a8a8;
}

.dyn-field.active {
  width: 47px;
  background: #fff;
}

.dyn-field.active span {
  display: block;
  width: 40px;
  color: #dce8f8;
  background: #1f6fd0;
  white-space: nowrap;
}

/* ---- layout tabs ---- */
.layout-tabs {
  height: 20px;
  display: flex;
  align-items: stretch;
  padding-left: 12px;
  background: #2a323d;
  color: #a8afb8;
}

.ltab {
  width: 54px;
  line-height: 20px;
  text-align: center;
  background: #303947;
  clip-path: polygon(0 0, 100% 0, calc(100% - 4px) 100%, 4px 100%);
}

.ltab.active {
  width: 44px;
  margin-right: 4px;
  color: #fff;
  font-weight: 700;
  background: #3a4352;
}

.ltab-add {
  margin-left: 8px;
  width: 13px;
  line-height: 19px;
  text-align: center;
  font-size: 13px;
  color: #b8bec6;
  background: #303947;
}

/* ---- status bar ---- */
.statusbar {
  height: 24px;
  display: flex;
  justify-content: flex-end;
  align-items: flex-start;
  padding: 1px 6px 0 0;
  background: #2a323d;
}

.st {
  width: 19px;
  height: 19px;
  display: flex;
  align-items: center;
  justify-content: center;
  background: #3a4352;
}

.st.on {
  background: #5a98cf;
}

.st.model {
  width: 40px;
  margin-right: 2px;
  font-size: 10.500px;
  color: #d8dce2;
}

.st.wide {
  width: 16px;
}

.st.lw {
  margin: 0 3px 0 0;
  width: 20px;
}

.st.gear {
  margin-left: 0;
}

.st.split {
  margin-left: 9px;
  margin-right: 3px;
}

.st.plus {
  width: 20px;
}

.gap2 {
  margin-right: 2px;
}

.st-caret {
  width: 16px;
  height: 19px;
  display: flex;
  align-items: center;
  justify-content: center;
  background: #3a4352;
}

.st-caret.narrow {
  width: 14px;
}

.st-scale {
  width: 18px;
  height: 19px;
  line-height: 19px;
  text-align: right;
  font-size: 10px;
  color: #d8dce2;
  background: #3a4352;
}

/* ---- taskbar ---- */
.taskbar {
  height: 34px;
  display: flex;
  align-items: center;
  background: #2e2327;
  color: #e8e8e8;
  filter: blur(.35px);
}

.start {
  width: 40px;
  display: flex;
  justify-content: center;
}

.win-search {
  width: 240px;
  height: 34px;
  display: flex;
  align-items: center;
  padding-left: 10px;
  background: #f3f3f3;
  color: #333;
}

.win-search-text {
  width: 145px;
  margin-left: 8px;
  font-size: 13px;
  font-family: "Open Sans", sans-serif;
  letter-spacing: -.4px;
  white-space: nowrap;
}

.sparkle {
  margin-left: 0;
}

.task {
  width: 41.500px;
  height: 34px;
  display: flex;
  align-items: center;
  justify-content: center;
}

.task.open {
  box-shadow: inset 0 -2px 0 #7ab8e0;
}

.task.cad {
  background: #5a5253;
  box-shadow: inset 0 -2px 0 #7ab8e0;
}

.cad-icon {
  width: 20px;
  height: 24px;
  line-height: 24px;
  text-align: center;
  font-family: "Liberation Sans", sans-serif;
  font-size: 20px;
  font-weight: 700;
  color: #b8222a;
  background: #f4f4f4;
}

.tray {
  flex: 1;
  display: flex;
  align-items: center;
  padding-left: 80px;
}

.thermo {
  margin-right: 5px;
}

.weather {
  width: 28px;
  margin-right: 21px;
  font-family: "DejaVu Sans", sans-serif;
  font-size: 11px;
  white-space: nowrap;
}

.t {
  margin-right: 4px;
}

.kbd {
  margin-left: 1px;
}

.lang {
  margin-left: 5px;
  font-size: 12px;
}

.clock {
  margin-left: 12px;
  display: flex;
  flex-direction: column;
  align-items: center;
  font-size: 10.500px;
  line-height: 16px;
}

.notify {
  position: relative;
  margin-left: 19px;
}

.notify-num {
  position: absolute;
  right: -4px;
  bottom: -3px;
  width: 13px;
  height: 13px;
  line-height: 12px;
  text-align: center;
  font-size: 9px;
  border: 1px solid #ccc;
  border-radius: 50%;
  background: #2e2327;
}
```
